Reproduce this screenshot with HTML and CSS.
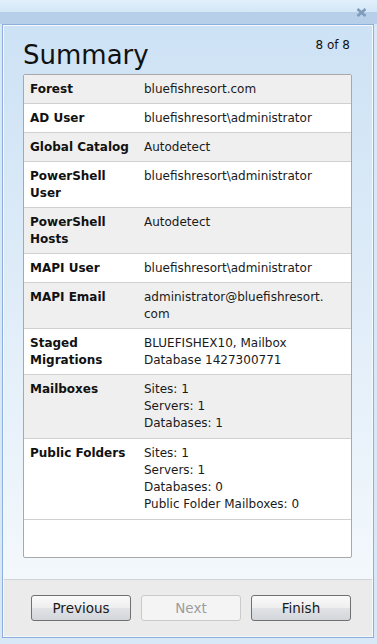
FILE: index.html
```html
<!DOCTYPE html>
<html lang="en">
<head>
    <meta charset="UTF-8">
    <meta name="viewport" content="width=device-width, initial-scale=1.0">
    <title>Summary</title>
    <link rel="stylesheet" href="styles.css">
</head>
<body>
    <div class="titlebar">
        <span class="close" title="Close">
            <svg width="11" height="9" viewBox="0 0 11 9">
                <path d="M1.5 1 L9.5 8 M9.5 1 L1.5 8" stroke="#7f9aba" stroke-width="2.6" fill="none"/>
            </svg>
        </span>
    </div>
    <div class="window">
        <div class="panel">
            <div class="header">
                <h1>Summary</h1>
                <span class="count">8 of 8</span>
            </div>
            <div class="summary">
                <div class="row">
                    <div class="label">Forest</div>
                    <div class="value">bluefishresort.com</div>
                </div>
                <div class="row">
                    <div class="label">AD User</div>
                    <div class="value">bluefishresort\administrator</div>
                </div>
                <div class="row">
                    <div class="label">Global Catalog</div>
                    <div class="value">Autodetect</div>
                </div>
                <div class="row">
                    <div class="label">PowerShell User</div>
                    <div class="value">bluefishresort\administrator</div>
                </div>
                <div class="row">
                    <div class="label">PowerShell Hosts</div>
                    <div class="value">Autodetect</div>
                </div>
                <div class="row">
                    <div class="label">MAPI User</div>
                    <div class="value">bluefishresort\administrator</div>
                </div>
                <div class="row">
                    <div class="label">MAPI Email</div>
                    <div class="value">administrator@bluefishresort.<wbr>com</div>
                </div>
                <div class="row">
                    <div class="label">Staged Migrations</div>
                    <div class="value">BLUEFISHEX10, Mailbox Database 1427300771</div>
                </div>
                <div class="row list">
                    <div class="label">Mailboxes</div>
                    <div class="value">Sites: 1<br>Servers: 1<br>Databases: 1</div>
                </div>
                <div class="row list">
                    <div class="label">Public Folders</div>
                    <div class="value">Sites: 1<br>Servers: 1<br>Databases: 0<br>Public Folder Mailboxes: 0</div>
                </div>
            </div>
        </div>
        <div class="footer">
            <button class="btn">Previous</button>
            <button class="btn" disabled>Next</button>
            <button class="btn">Finish</button>
        </div>
    </div>
</body>
</html>
```

FILE: styles.css
```css
body {
    margin: 0;
    height: 644px;
    overflow: hidden;
    background: #d9e8f6;
    font-family: "DejaVu Sans", Verdana, sans-serif;
    font-size: 12px;
    color: #1a1a1a;
}

.titlebar {
    height: 24px;
    display: flex;
    justify-content: flex-end;
    align-items: flex-start;
    background: linear-gradient(#e2f0fb 0, #d3e7f7 12px, #b8cfea 12px, #b8cfea 24px);
}

.titlebar .close {
    margin: 8px 10px 0 0;
    display: flex;
}

.window {
    margin: 0 3px 0 2px;
    border: 1px solid #8eafdb;
    box-shadow: inset 0 0 0 1px #f4f9fe;
    padding: 1px;
    height: 610px;
    display: flex;
    flex-direction: column;
    background: #ebebeb;
}

.panel {
    flex: 1;
    padding: 14px 20px 0 19px;
    background: linear-gradient(#cde2f5, #f3f8fc);
    border-bottom: 1px solid #cfd2d6;
}

.header {
    display: flex;
    justify-content: space-between;
    align-items: flex-start;
    height: 34px;
    padding-right: 2px;
}

.header h1 {
    margin: 0;
    font-weight: normal;
    font-size: 26px;
    line-height: 30px;
    color: #111;
}

.header .count {
    margin-top: -3px;
    line-height: 17px;
    color: #111;
}

.summary {
    height: 482px;
    border: 1px solid #a8a8a8;
    border-radius: 2px;
    background: #fff;
}

.row {
    display: grid;
    grid-template-columns: 120px 1fr;
    line-height: 17px;
    border-bottom: 1px solid #d0d0d0;
}

.row:nth-child(odd) {
    background: #efefef;
}

.row .label {
    padding: 6px 12px 5px 6px;
    font-weight: bold;
    color: #111;
}

.row .value {
    padding: 6px 6px 5px 0;
}

.row.list .value {
    padding-bottom: 6px;
}

.footer {
    height: 56px;
    display: flex;
    gap: 10px;
    padding: 15px 0 0 27px;
    box-sizing: border-box;
}

.btn {
    width: 100px;
    height: 26px;
    font-family: "DejaVu Sans", Verdana, sans-serif;
    font-size: 13.5px;
    color: #1a1a1a;
    border: 1px solid #707070;
    border-radius: 3px;
    background: linear-gradient(#fafafa, #eeeeee 50%, #e1e3e6 50%, #d3d6da);
    padding: 0;
}

.btn:disabled {
    color: #9c9c9c;
    border-color: #cacaca;
    background: #f4f4f4;
}
```
